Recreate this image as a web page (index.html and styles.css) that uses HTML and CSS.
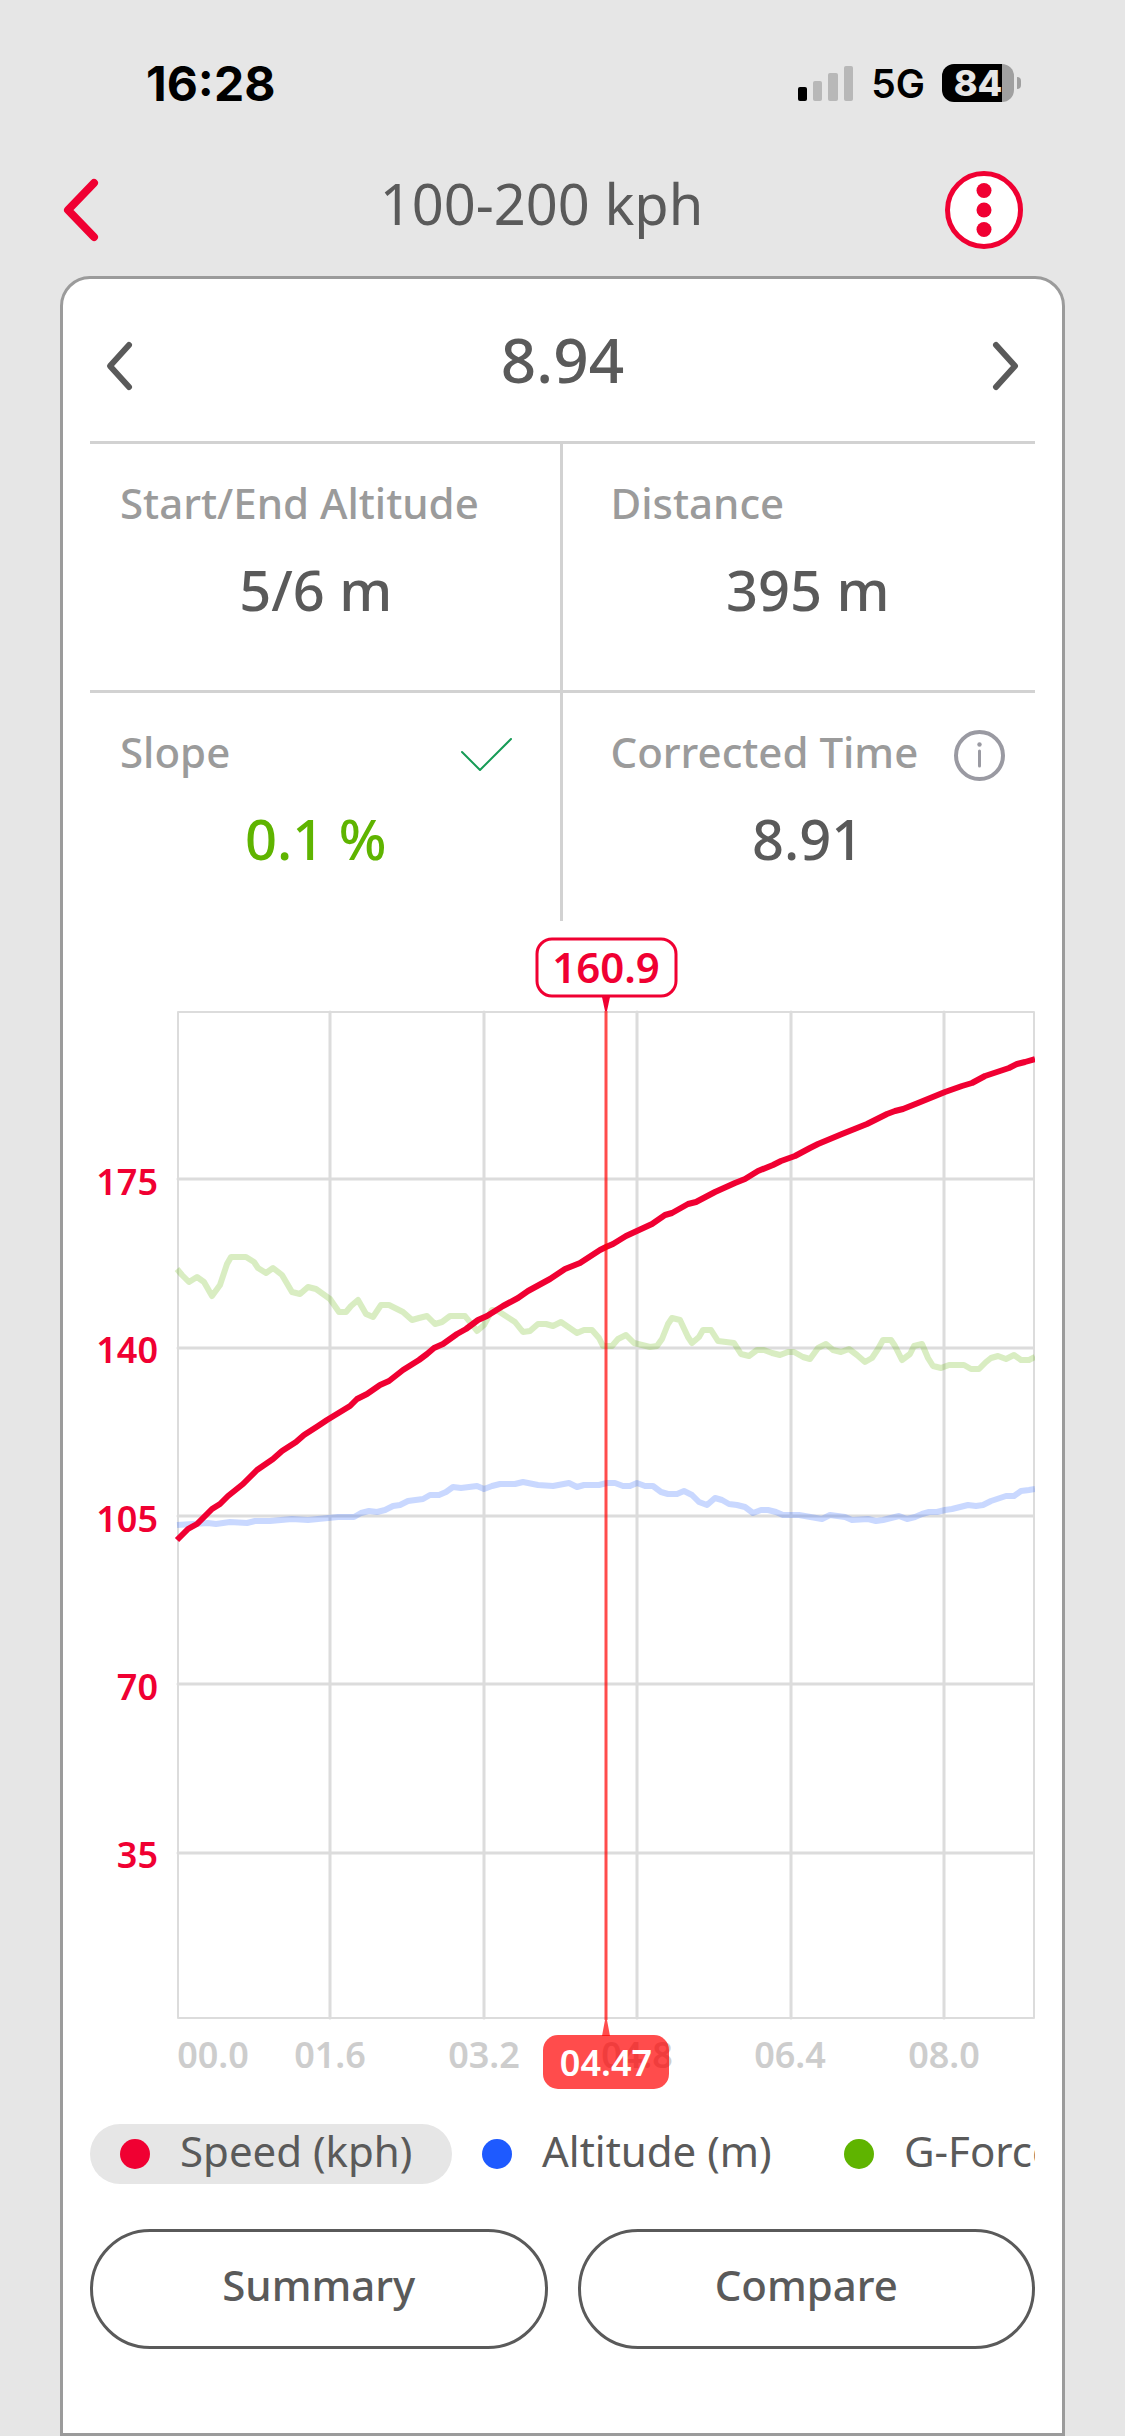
FILE: index.html
```
<!DOCTYPE html>
<html lang="en">
<head>
  <meta charset="UTF-8">
  <meta name="viewport" content="width=device-width, initial-scale=1">
  <title>100-200 kph</title>
  <link rel="stylesheet" href="styles.css">
</head>
<body>

  <!-- Status bar -->
  <div class="status-bar">
    <span class="time">16:28</span>
    <div class="status-icons">
      <svg class="signal" width="56" height="36" viewBox="0 0 56 36">
        <rect x="0" y="22" width="9" height="14" rx="2" fill="#000"/>
        <rect x="15" y="16" width="9" height="20" rx="2" fill="#b8b8b8"/>
        <rect x="30" y="8" width="10" height="28" rx="2" fill="#b8b8b8"/>
        <rect x="46" y="1" width="9" height="35" rx="2" fill="#b8b8b8"/>
      </svg>
      <span class="network">5G</span>
      <div class="battery"><span>84</span></div>
    </div>
  </div>

  <header class="header">
    <button class="icon-btn back" aria-label="Back">
      <svg width="40" height="66" viewBox="0 0 40 66"><path d="M34 6 L8 33 L34 60" stroke="#f00032" stroke-width="8"/></svg>
    </button>
    <h1>100-200 kph</h1>
    <button class="icon-btn" aria-label="Menu">
      <svg width="78" height="78" viewBox="0 0 78 78">
        <circle cx="39" cy="39" r="36.5" fill="#fff" stroke="#f00032" stroke-width="5"/>
        <g fill="#f00032">
          <circle cx="39" cy="19.5" r="7.5"/>
          <circle cx="39" cy="39" r="7.5"/>
          <circle cx="39" cy="58.5" r="7.5"/>
        </g>
      </svg>
    </button>
  </header>

  <main class="card">
    <div class="result">
      <button class="icon-btn" aria-label="Previous">
        <svg width="30" height="52" viewBox="0 0 30 52"><path d="M25 5 L6 26 L25 47" stroke="#5a5a5a" stroke-width="6"/></svg>
      </button>
      <h2>8.94</h2>
      <button class="icon-btn" aria-label="Next">
        <svg width="30" height="52" viewBox="0 0 30 52"><path d="M5 5 L24 26 L5 47" stroke="#5a5a5a" stroke-width="6"/></svg>
      </button>
    </div>

    <div class="stats">
      <div class="stat">
        <div class="label">Start/End Altitude</div>
        <div class="value">5/6 m</div>
      </div>
      <div class="stat">
        <div class="label">Distance</div>
        <div class="value">395 m</div>
      </div>
      <div class="stat">
        <div class="label">Slope
          <svg width="51" height="34" viewBox="0 0 51 34"><path d="M1 14 L19 32 L50 1" stroke="#169b56" stroke-width="2"/></svg>
        </div>
        <div class="value good">0.1 %</div>
      </div>
      <div class="stat">
        <div class="label">Corrected Time
          <button class="icon-btn" aria-label="Info">
            <svg width="51" height="51" viewBox="0 0 51 51">
              <circle cx="25.5" cy="25.5" r="23.5" stroke="#9a9aa2" stroke-width="4"/>
              <path d="M25.5 21 V36" stroke="#9a9aa2" stroke-width="3"/>
              <circle cx="25.5" cy="14.5" r="2.2" fill="#9a9aa2"/>
            </svg>
          </button>
        </div>
        <div class="value">8.91</div>
      </div>
    </div>

    <!-- Chart -->
    <svg class="chart" viewBox="0 0 945 1176">
      <g class="axis-y">
        <text x="68" y="274">175</text>
        <text x="68" y="442">140</text>
        <text x="68" y="611">105</text>
        <text x="68" y="779">70</text>
        <text x="68" y="947">35</text>
      </g>
      <g class="axis-x">
        <text x="123" y="1147">00.0</text>
        <text x="240" y="1147">01.6</text>
        <text x="394" y="1147">03.2</text>
        <text x="547" y="1147">04.8</text>
        <text x="700" y="1147">06.4</text>
        <text x="854" y="1147">08.0</text>
      </g>
      <g transform="translate(87 90)">
        <path class="frame" d="M1 1 H857 V1007 H1 Z"/>
        <path class="grid" d="M153 1V1007M307 1V1007M460 1V1007M614 1V1007M767 1V1007M1 168H857M1 337H857M1 505H857M1 673H857M1 842H857"/>
        <polyline class="line gforce" points="0,258 5,264 12,271 20,266 27,271 35,285 43,274 50,253 54,246 69,246 77,251 81,257 89,262 96,257 105,264 115,281 123,283 131,276 139,278 153,288 162,301 169,301 174,295 181,289 189,303 196,306 204,294 212,294 220,298 226,301 235,309 242,307 250,305 258,313 265,311 273,305 288,305 300,320 307,314 315,299 321,300 338,311 346,321 353,320 361,313 369,313 376,315 384,311 400,322 407,319 415,319 422,327 426,335 435,335 441,328 449,324 457,332 473,336 480,335 485,328 491,313 495,307 503,309 511,326 515,332 522,326 526,319 534,319 541,330 557,332 564,343 572,345 580,339 587,339 595,342 603,344 611,341 617,341 626,346 633,348 641,337 649,333 656,339 664,341 672,338 680,344 688,351 695,347 701,338 706,329 714,329 718,335 725,349 733,343 737,335 745,333 751,347 756,355 764,357 772,354 787,354 794,358 802,358 809,351 814,347 821,345 829,348 837,344 844,349 852,349 858,346"/>
        <polyline class="line altitude" points="0,514 16,513 31,512 39,513 53,511 70,512 78,510 93,510 115,508 131,509 161,506 177,506 184,502 192,500 200,501 208,499 216,495 223,494 231,490 246,488 253,484 262,484 269,481 276,476 284,477 300,475 307,478 315,475 323,473 338,473 346,471 361,474 376,475 392,472 400,476 407,474 422,474 430,472 438,472 446,475 453,475 460,472 468,475 476,475 484,481 491,483 500,483 507,480 515,484 522,491 530,494 538,487 545,489 552,493 560,494 568,496 576,502 584,499 591,499 599,501 606,504 622,504 645,508 653,504 668,506 675,509 691,508 699,510 706,509 714,507 722,505 730,508 738,506 745,503 752,501 760,501 768,499 775,498 791,494 799,495 806,494 814,490 829,485 837,485 844,480 852,479 858,478"/>
        <polyline class="line speed" points="0,529 11,518 20,513 35,498 43,493 51,485 66,473 73,466 80,459 96,448 105,440 119,431 127,424 141,415 150,409 173,395 180,388 190,383 203,374 212,370 226,359 242,349 250,343 257,337 266,333 280,323 289,318 301,309 310,305 326,295 341,287 351,280 373,268 388,258 403,252 423,239 429,236 436,233 449,225 475,213 488,204 495,202 511,193 519,191 538,181 558,172 568,168 581,160 596,154 604,150 618,145 633,137 641,133 665,123 690,113 710,103 718,100 726,98 741,92 768,81 785,75 795,72 808,65 832,57 840,53 848,51 858,48"/>

        <!-- Cursor -->
        <path class="cursor" d="M429 0 V1009"/>
        <path d="M425 -14 H433 L430 0 H428 Z" fill="#f00032"/>
        <rect class="bubble" x="360" y="-72" width="139" height="57" rx="15"/>
        <text class="bubble-text" x="429" y="-28">160.9</text>
        <path class="cursor-fill" d="M428 1009 H430 L433 1025 H425 Z"/>
        <rect class="cursor-fill" x="366" y="1024" width="126" height="54" rx="15"/>
        <text class="cursor-text" x="429" y="1065">04.47</text>
      </g>
    </svg>

    <div class="legend">
      <button class="chip active"><i class="dot red"></i><span>Speed (kph)</span></button>
      <button class="chip"><i class="dot blue"></i><span>Altitude (m)</span></button>
      <button class="chip"><i class="dot green"></i><span>G-Force</span></button>
    </div>

    <div class="actions">
      <button>Summary</button>
      <button>Compare</button>
    </div>
  </main>

</body>
</html>
```
FILE: styles.css
```
* {
  box-sizing: border-box;
}
body {
  margin: 0;
  min-height: 100vh;
  display: flex;
  flex-direction: column;
  background: #e6e6e6;
  color: #5a5a5a;
  font-family: "Noto Sans", "Open Sans", sans-serif;
}
button {
  font-family: inherit;
  color: inherit;
  cursor: pointer;
}
svg {
  display: block;
  fill: none;
  stroke-linecap: round;
  stroke-linejoin: round;
}
.icon-btn {
  padding: 0;
  border: none;
  background: none;
}

/* Status bar */
.status-bar {
  display: flex;
  justify-content: space-between;
  align-items: center;
  padding: 56px 111px 0 146px;
  height: 110px;
  color: #000;
  font-family: Inter, sans-serif;
}
.time {
  font-size: 48px;
  font-weight: 700;
}
.status-icons {
  display: flex;
  align-items: center;
}
.network {
  margin: 0 17px;
  font-size: 39px;
  font-weight: 600;
}
.battery {
  position: relative;
  width: 72px;
  height: 38px;
  border-radius: 12px;
  background: linear-gradient(to right, #000 60px, #a0a0a0 60px);
  color: #e6e6e6;
  font-size: 36px;
  font-weight: 800;
  line-height: 38px;
  text-align: center;
}
.battery::after {
  content: "";
  position: absolute;
  left: 75px;
  top: 13px;
  width: 4px;
  height: 12px;
  border-radius: 0 4px 4px 0;
  background: #a0a0a0;
}

/* Header */
.header {
  display: flex;
  justify-content: space-between;
  align-items: center;
  height: 166px;
  padding: 34px 102px 0 60px;
}
.back {
  width: 78px;
}
.header h1 {
  margin: 0;
  padding-bottom: 14px;
  font-size: 56px;
  font-weight: 400;
}

/* Card */
.card {
  flex: 1;
  margin: 0 60px;
  padding: 0 27px;
  border: 3px solid #9b9b9b;
  border-radius: 30px 30px 0 0;
  background: #fff;
}
.result {
  display: flex;
  justify-content: space-between;
  align-items: center;
  height: 165px;
  padding: 12px 14px 0;
  border-bottom: 3px solid #d2d2d2;
}
.result h2 {
  margin: 0;
  padding-bottom: 14px;
  font-size: 62px;
  font-weight: 500;
}
.stats {
  display: grid;
  grid-template-columns: 1fr 1fr;
}
.stat {
  height: 228px;
  padding: 28px 30px 0 48px;
}
.stat:nth-child(odd) {
  padding: 28px 48px 0 30px;
  border-right: 3px solid #d2d2d2;
}
.stat:nth-child(-n+2) {
  height: 249px;
  border-bottom: 3px solid #d2d2d2;
}
.label {
  display: flex;
  justify-content: space-between;
  align-items: center;
  height: 60px;
  color: #9b9b9b;
  font-size: 42px;
  font-weight: 500;
  white-space: nowrap;
}
.label svg {
  margin-top: 8px;
}
.value {
  margin-top: 21px;
  font-size: 56px;
  font-weight: 500;
  line-height: 72px;
  text-align: center;
}
.good {
  color: #5fb400;
}

/* Chart */
.chart {
  width: 100%;
}
.chart text {
  font-size: 36px;
  font-weight: 600;
  text-anchor: middle;
}
.chart .axis-y text {
  fill: #f00032;
  text-anchor: end;
}
.axis-x text {
  fill: #cdcdcd;
}
.frame {
  stroke: #dcdcdc;
  stroke-width: 2;
}
.grid {
  stroke: #dcdcdc;
  stroke-width: 3;
}
.line {
  stroke-width: 6;
  stroke-linecap: butt;
}
.speed {
  stroke: #f00032;
}
.altitude {
  stroke: rgba(30, 90, 255, 0.24);
}
.gforce {
  stroke: rgba(95, 180, 0, 0.24);
}
.cursor {
  stroke: rgba(255, 0, 0, 0.7);
  stroke-width: 3;
  stroke-linecap: butt;
}
.cursor-fill {
  fill: rgba(255, 0, 0, 0.7);
}
.bubble {
  fill: #fff;
  stroke: #f00032;
  stroke-width: 3;
}
.chart .bubble-text {
  fill: #f00032;
  font-size: 42px;
}
.chart .cursor-text {
  fill: #fff;
}

/* Legend */
.legend {
  display: flex;
  margin-top: 21px;
  padding-top: 6px;
  overflow: hidden;
}
.chip {
  display: flex;
  flex-shrink: 0;
  align-items: center;
  gap: 30px;
  min-width: 362px;
  height: 60px;
  padding: 0 30px;
  border: none;
  border-radius: 30px;
  background: none;
  font-size: 42px;
  font-weight: 400;
  line-height: 54px;
}
.chip span {
  padding-bottom: 6px;
}
.chip.active {
  background: #e6e6e6;
}
.dot {
  width: 30px;
  height: 30px;
  border-radius: 50%;
}
.red {
  background: #f00032;
}
.blue {
  background: #1e5aff;
}
.green {
  background: #5fb400;
}

/* Buttons */
.actions {
  display: flex;
  gap: 30px;
  margin-top: 45px;
}
.actions button {
  flex: 1;
  height: 120px;
  padding: 0 0 10px;
  border: 3px solid #5a5a5a;
  border-radius: 60px;
  background: #fff;
  font-size: 42px;
  font-weight: 500;
}
```
